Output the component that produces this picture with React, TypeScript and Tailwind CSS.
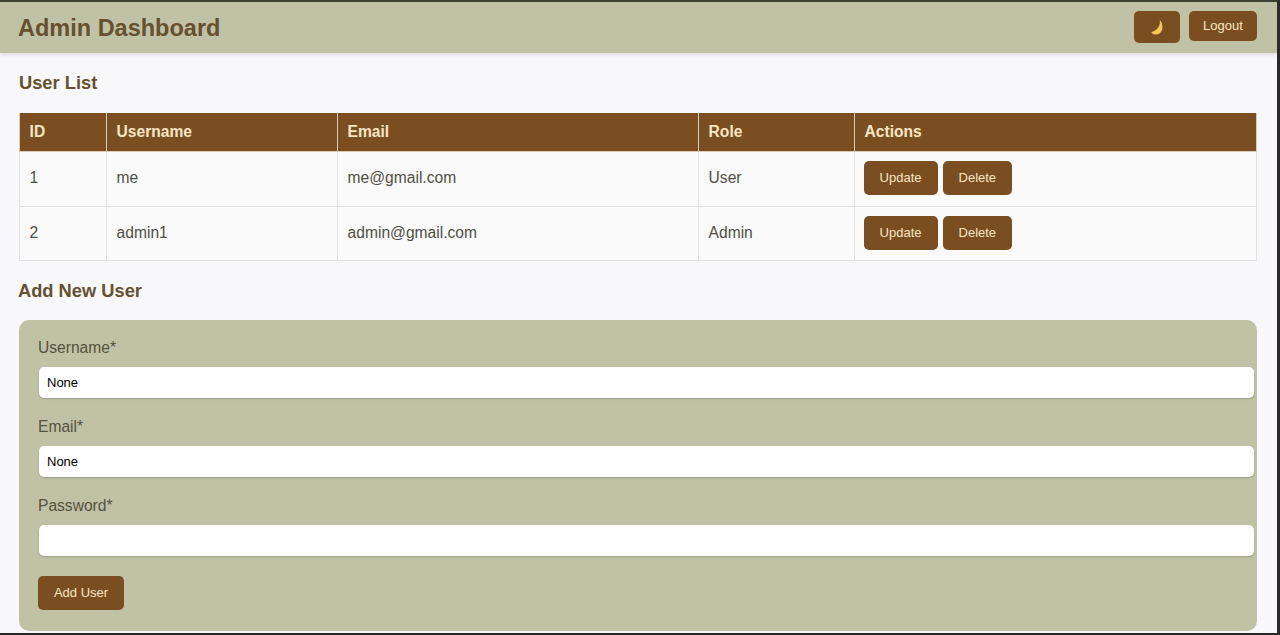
const users = [
  { id: 1, username: "me", email: "me@gmail.com", role: "User" },
  { id: 2, username: "admin1", email: "admin@gmail.com", role: "Admin" },
];

const fields = [
  { label: "Username*", value: "None" },
  { label: "Email*", value: "None" },
  { label: "Password*", value: "" },
];

function MoonIcon() {
  return (
    <svg width="14" height="17" viewBox="0 0 14 17">
      <path d="M9.6 0.8 C11 5.5 8 11.5 1.2 13.2 C2.8 15.6 6.8 16.4 9.6 14.6 C13.4 12 13.4 4.4 9.6 0.8 Z" fill="#f2c94c" />
    </svg>
  );
}

function ActionButton({ label }: { label: string }) {
  return (
    <button className="h-[34px] rounded-[5px] bg-[#7a4e20] px-4 text-[13px] text-[#f8e6c4]">
      {label}
    </button>
  );
}

export default function App() {
  return (
    <div className="h-[635px] w-[1280px] overflow-hidden border-t-2 border-b-2 border-r-[3px] border-t-[#3c4030] border-b-[#2a2a2a] border-r-[#2a2a2a] bg-[#f8f8fb] font-['Liberation_Sans',Arial,sans-serif]">
      <header className="flex h-[51px] items-start justify-between bg-[#c0c2a5] pt-[9px] pl-[18px] pr-5 shadow-[0_1px_4px_rgba(0,0,0,0.15)]">
        <h1 className="mt-[3px] text-[23.5px] leading-[28px] font-bold text-[#66502f]">Admin Dashboard</h1>
        <div className="flex items-start gap-[9px]">
          <button className="flex h-[32px] w-[46px] items-center justify-center rounded-[5px] bg-[#7a4e20]">
            <MoonIcon />
          </button>
          <button className="h-[30px] w-[68px] rounded-[5px] bg-[#7a4e20] text-[13px] text-[#f8e6c4]">
            Logout
          </button>
        </div>
      </header>

      <main className="w-[1257px] pl-[18px]">
        <h2 className="mt-[18px] ml-px text-[18.3px] leading-[24px] font-bold text-[#66502f]">User List</h2>

        <table className="mt-[18px] ml-px w-[1238px] table-fixed border-collapse bg-[#fafafa] text-[15.6px] text-[#4f4f46]">
          <colgroup>
            <col className="w-[87px]" />
            <col className="w-[231px]" />
            <col className="w-[361px]" />
            <col className="w-[156px]" />
            <col />
          </colgroup>
          <thead>
            <tr className="h-[38px] bg-[#7a4e20] text-left text-[#f8e6c4]">
              {["ID", "Username", "Email", "Role", "Actions"].map((h) => (
                <th key={h} className="border border-[#d9cdb8] border-t-0 px-[9.6px] font-bold">
                  {h}
                </th>
              ))}
            </tr>
          </thead>
          <tbody>
            {users.map((u, i) => {
              const cell = `border border-[#e2e2e2] px-[9.6px] ${i === 0 ? "pb-[2px]" : ""}`;
              return (
                <tr key={u.id} className={i === 0 ? "h-[55px]" : "h-[54px]"}>
                  <td className={cell}>{u.id}</td>
                  <td className={cell}>{u.username}</td>
                  <td className={cell}>{u.email}</td>
                  <td className={cell}>{u.role}</td>
                  <td className={cell}>
                    <div className="-ml-px flex gap-[5px]">
                      <ActionButton label="Update" />
                      <ActionButton label="Delete" />
                    </div>
                  </td>
                </tr>
              );
            })}
          </tbody>
        </table>

        <h2 className="mt-[18px] text-[18.3px] leading-[24px] font-bold text-[#66502f]">Add New User</h2>

        <form className="mt-[17px] ml-px h-[311px] w-[1238px] rounded-[10px] bg-[#c0c2a5] pt-[18px] pl-[19px]">
          {fields.map((f) => (
            <div key={f.label} className="mb-[19px]">
              <label className="block text-[15.6px] leading-[20px] text-[#55533c]">{f.label}</label>
              <input
                readOnly
                value={f.value}
                className="mt-[9px] ml-px block h-[31px] w-[1215px] rounded-[5px] bg-white px-2 text-[13px] text-black shadow-[0_1px_2px_rgba(0,0,0,0.2)]"
              />
            </div>
          ))}
          <button
            type="button"
            className="mt-px h-[34px] w-[86px] rounded-[5px] bg-[#7a4e20] text-[13px] text-[#f8e6c4]"
          >
            Add User
          </button>
        </form>
      </main>
    </div>
  );
}
